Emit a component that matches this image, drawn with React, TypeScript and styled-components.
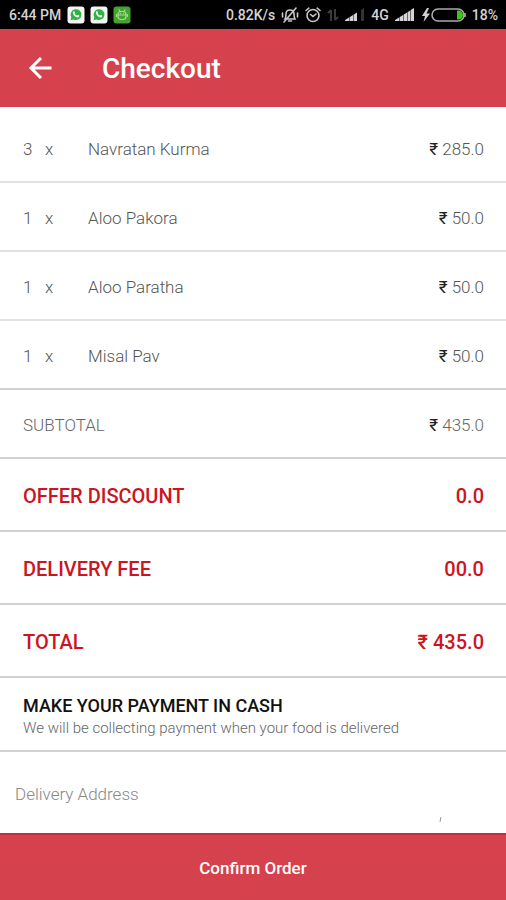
import React from "react";
import styled, { createGlobalStyle, css } from "styled-components";

const Global = createGlobalStyle`
  *, *::before, *::after { box-sizing: border-box; }
  body { margin: 0; background: #fff; }
  body, button, input { font-family: Roboto, "Liberation Sans", sans-serif; }
`;

const accent = "#d6414e";

const Screen = styled.div`
  min-height: 100vh;
  display: flex;
  flex-direction: column;
  background: #fff;
`;

const StatusBar = styled.div`
  height: 29px;
  padding: 0 8px;
  display: flex;
  align-items: center;
  justify-content: space-between;
  background: #000;
  color: #d4d4d4;
  font-size: 14px;
  font-weight: 500;
  white-space: nowrap;
`;

const StatusGroup = styled.div<{ $gap: number }>`
  display: flex;
  align-items: center;
  gap: ${(p) => p.$gap}px;
  svg { display: block; flex: none; }
`;

const Clock = styled.time`
  padding: 0 1px;
`;

const Header = styled.header`
  height: 78px;
  padding: 2px 25px 0;
  display: flex;
  align-items: center;
  gap: 48px;
  background: ${accent};
  color: #fff;
`;

const BackButton = styled.button`
  width: 29px;
  height: 34px;
  padding: 0 0 2px;
  border: 0;
  background: none;
  color: inherit;
  svg { display: block; }
`;

const Title = styled.h1`
  margin: 0;
  font-size: 28px;
  font-weight: 500;
  line-height: 32px;
`;

const Main = styled.main`
  flex: 1;
  display: flex;
  flex-direction: column;
`;

const Items = styled.ul`
  margin: 0;
  padding: 7px 0 0;
  list-style: none;
`;

const rowBase = css`
  padding: 2px 22px 0 23px;
  display: flex;
  align-items: center;
  border-bottom: 2px solid #d2d2d2;
`;

const Item = styled.li`
  ${rowBase}
  height: 69px;
  font-size: 17px;
  font-weight: 300;
  color: #555;
  &:not(:last-child) { border-bottom-color: #e2e2e2; }
`;

const Quantity = styled.span`
  width: 22px;
`;

const Times = styled.span`
  width: 43px;
`;

const Grow = styled.span`
  flex: 1;
`;

const Rupee = styled.span`
  font-weight: 400;
  color: #222;
`;

const Summary = styled.dl`
  margin: 0;
`;

const SummaryRow = styled.div<{ $strong?: boolean }>`
  ${rowBase}
  justify-content: space-between;
  height: ${(p) => (p.$strong ? 73 : 69)}px;
  font-size: ${(p) => (p.$strong ? 20 : 17)}px;
  font-weight: ${(p) => (p.$strong ? 500 : 300)};
  color: ${(p) => (p.$strong ? "#cb1522" : "#666")};
  dd { margin: 0; }
`;

const Payment = styled.section`
  ${rowBase}
  height: 74px;
  padding-top: 4px;
  flex-direction: column;
  align-items: flex-start;
  justify-content: center;
`;

const PaymentTitle = styled.h2`
  margin: 0;
  font-size: 18px;
  line-height: 24px;
  font-weight: 500;
  color: #111;
`;

const PaymentNote = styled.p`
  margin: 0;
  font-size: 15px;
  line-height: 20px;
  font-weight: 300;
  color: #666;
`;

const AddressField = styled.div`
  flex: 1;
  min-height: 80px;
  display: flex;
  position: relative;
`;

const AddressInput = styled.input`
  flex: 1;
  min-width: 0;
  padding: 2px 15px 0;
  border: 0;
  outline: 0;
  background: none;
  font-size: 17px;
  font-weight: 300;
  color: #555;
  &::placeholder { color: #888; opacity: 1; }
`;

const FieldMark = styled.svg`
  position: absolute;
  right: 64px;
  bottom: 11px;
`;

const ConfirmButton = styled.button`
  height: 67px;
  padding: 0;
  border: 0;
  border-top: 2px solid #c72d3d;
  background: ${accent};
  color: #fff;
  font-size: 17px;
  font-weight: 500;
`;

const items = [
  { name: "Navratan Kurma", quantity: 3, price: "285.0" },
  { name: "Aloo Pakora", quantity: 1, price: "50.0" },
  { name: "Aloo Paratha", quantity: 1, price: "50.0" },
  { name: "Misal Pav", quantity: 1, price: "50.0" },
];

function ChatIcon() {
  return (
    <svg width="18" height="18" viewBox="0 0 18 18" aria-hidden="true">
      <rect x="0.5" y="0.5" width="17" height="17" rx="3" fill="#f4f4f4" />
      <path d="M3.500 14.300l.8-3A5.400 5.400 0 1 1 6.700 13.500z" fill="#2fb344" />
      <path d="M6 5.800c.6-1 1.500-.8 1.900.4.200.7-.4.900-.3 1.300.5.900 1.300 1.700 2.200 2.100.500.200.800-.7 1.400-.5 1.300.5 1.400 1.100.5 1.900C9.600 12.700 5.100 8.500 6 5.800z" fill="#fff" />
    </svg>
  );
}

function RobotIcon() {
  return (
    <svg width="18" height="18" viewBox="0 0 18 18" aria-hidden="true">
      <rect x="0.5" y="0.5" width="17" height="17" rx="3" fill="#45a32f" />
      <g fill="none" stroke="#a9d896" strokeWidth="1.200" strokeLinecap="round">
        <path d="M6 3.800l1 1.700M12 3.800l-1 1.700" />
        <rect x="5" y="5.500" width="8" height="8" rx="3" />
        <path d="M5 9h8M3.600 8.500v2M14.400 8.500v2M7.500 7.300h.1M10.500 7.300h.1" />
      </g>
    </svg>
  );
}

function MutedBellIcon() {
  return (
    <svg width="18" height="16" viewBox="0 0 18 16" fill="none" stroke="#c8c8c8" strokeWidth="1.600" strokeLinecap="round" aria-hidden="true">
      <path d="M4 12c1-1.500 1-3 1-5 0-2.500 1.500-4 4-4s4 1.500 4 4c0 2 0 3.500 1 5zM7.500 14h3M15 1L3 15M1.500 6v4M16.500 6v4" />
    </svg>
  );
}

function AlarmIcon() {
  return (
    <svg width="16" height="16" viewBox="0 0 16 16" fill="none" stroke="#c8c8c8" strokeWidth="1.600" strokeLinecap="round" aria-hidden="true">
      <circle cx="8" cy="8.500" r="6" />
      <path d="M1 3.500L3.800 1.200M15 3.500l-2.800-2.300M5.500 7.500L8 9.500l3-2.500" />
    </svg>
  );
}

function DataArrowsIcon() {
  return (
    <svg width="12" height="14" viewBox="0 0 12 14" fill="none" stroke="#3c3c3c" strokeWidth="2" aria-hidden="true">
      <path d="M4 13V2M1 5l3-3M8 1v11M11 9l-3 3" />
    </svg>
  );
}

function SignalIcon({ weak }: { weak?: boolean }) {
  return (
    <svg width="20" height="13" viewBox="0 0 20 13" aria-hidden="true">
      <path d="M0 13v-1l4-2.500V13z M4.500 13V9.200L8 7v6z M8.500 13V6.700L12 4.500V13z" fill="#d4d4d4" />
      <path d="M12.500 13V4.200L15.500 2.200V13z" fill={weak ? "#000" : "#d4d4d4"} />
      <path d="M16 13V1.800L19 0v13z" fill={weak ? "#333" : "#d4d4d4"} />
    </svg>
  );
}

function BatteryIcon() {
  return (
    <svg width="45" height="14" viewBox="0 0 45 14" aria-hidden="true">
      <path d="M6 0L1 8h3l-1.500 6L9 5.500H5.500L8 0z" fill="#d4d4d4" />
      <rect x="11" y="1" width="32" height="12" rx="6" fill="none" stroke="#aaa" strokeWidth="1.600" />
      <path d="M36 2.500h1.500a4.500 4.500 0 0 1 0 9H36z" fill="#3fc41c" />
      <path d="M44 5v4" stroke="#aaa" strokeWidth="1.600" />
    </svg>
  );
}

export default function App() {
  return (
    <Screen>
      <Global />
      <StatusBar>
        <StatusGroup $gap={5}>
          <Clock>6:44 PM</Clock>
          <ChatIcon />
          <ChatIcon />
          <RobotIcon />
        </StatusGroup>
        <StatusGroup $gap={6}>
          <span>0.82K/s</span>
          <MutedBellIcon />
          <AlarmIcon />
          <DataArrowsIcon />
          <SignalIcon weak />
          <span>4G</span>
          <SignalIcon />
          <BatteryIcon />
          <span>18%</span>
        </StatusGroup>
      </StatusBar>
      <Header>
        <BackButton type="button" aria-label="Back">
          <svg width="29" height="32" viewBox="0 0 29 32" fill="none" stroke="currentColor" strokeWidth="3" aria-hidden="true">
            <path d="M26.500 16H6M16 6L6 16l10 10" />
          </svg>
        </BackButton>
        <Title>Checkout</Title>
      </Header>
      <Main>
        <Items>
          {items.map((item) => (
            <Item key={item.name}>
              <Quantity>{item.quantity}</Quantity>
              <Times>x</Times>
              <Grow>{item.name}</Grow>
              <span><Rupee>₹</Rupee> {item.price}</span>
            </Item>
          ))}
        </Items>
        <Summary>
          <SummaryRow>
            <dt>SUBTOTAL</dt>
            <dd><Rupee>₹</Rupee> 435.0</dd>
          </SummaryRow>
          <SummaryRow $strong><dt>OFFER DISCOUNT</dt><dd>0.0</dd></SummaryRow>
          <SummaryRow $strong><dt>DELIVERY FEE</dt><dd>00.0</dd></SummaryRow>
          <SummaryRow $strong><dt>TOTAL</dt><dd>₹ 435.0</dd></SummaryRow>
        </Summary>
        <Payment>
          <PaymentTitle>MAKE YOUR PAYMENT IN CASH</PaymentTitle>
          <PaymentNote>We will be collecting payment when your food is delivered</PaymentNote>
        </Payment>
        <AddressField>
          <AddressInput type="text" aria-label="Delivery Address" placeholder="Delivery Address" />
          <FieldMark width="3" height="5" viewBox="0 0 3 5" aria-hidden="true">
            <path d="M2 0L1 5" stroke="#999" strokeWidth="1" />
          </FieldMark>
        </AddressField>
      </Main>
      <ConfirmButton type="button">Confirm Order</ConfirmButton>
    </Screen>
  );
}
